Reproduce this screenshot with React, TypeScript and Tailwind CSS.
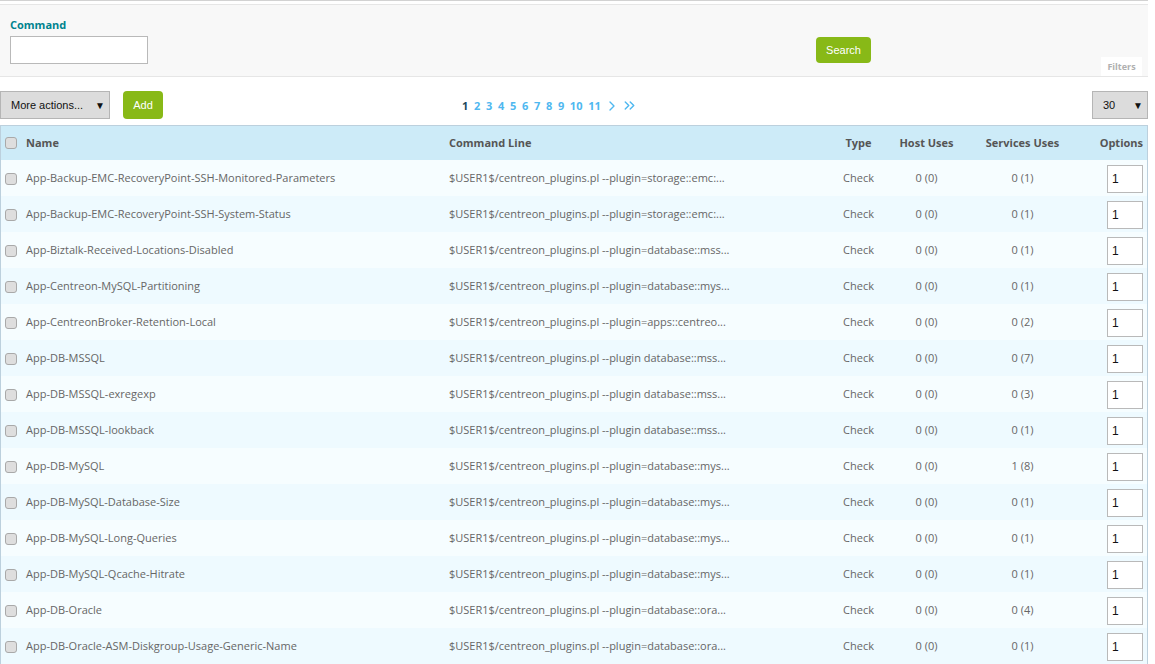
import { ChevronRight, ChevronsRight } from "lucide-react";

const ROWS: [string, string, string, string][] = [
  ["App-Backup-EMC-RecoveryPoint-SSH-Monitored-Parameters", "--plugin=storage::emc:...", "0", "1"],
  ["App-Backup-EMC-RecoveryPoint-SSH-System-Status", "--plugin=storage::emc:...", "0", "1"],
  ["App-Biztalk-Received-Locations-Disabled", "--plugin=database::mss...", "0", "1"],
  ["App-Centreon-MySQL-Partitioning", "--plugin=database::mys...", "0", "1"],
  ["App-CentreonBroker-Retention-Local", "--plugin=apps::centreo...", "0", "2"],
  ["App-DB-MSSQL", "--plugin database::mss...", "0", "7"],
  ["App-DB-MSSQL-exregexp", "--plugin database::mss...", "0", "3"],
  ["App-DB-MSSQL-lookback", "--plugin database::mss...", "0", "1"],
  ["App-DB-MySQL", "--plugin=database::mys...", "1", "8"],
  ["App-DB-MySQL-Database-Size", "--plugin=database::mys...", "0", "1"],
  ["App-DB-MySQL-Long-Queries", "--plugin=database::mys...", "0", "1"],
  ["App-DB-MySQL-Qcache-Hitrate", "--plugin=database::mys...", "0", "1"],
  ["App-DB-Oracle", "--plugin=database::ora...", "0", "4"],
  ["App-DB-Oracle-ASM-Diskgroup-Usage-Generic-Name", "--plugin=database::ora...", "0", "1"],
];

const PAGES = ["2", "3", "4", "5", "6", "7", "8", "9", "10", "11"];

function Check() {
  return (
    <input
      type="checkbox"
      aria-label="Select"
      className="block h-[12px] w-[12px] appearance-none rounded-[3px] border border-[#a9a9a9] bg-[#dedede]"
    />
  );
}

function SelectBox({ label, box }: { label: string; box: string }) {
  return (
    <div className={"flex h-[28px] items-center justify-between border border-[#b5b5b5] bg-[#dcdcdc] text-[11px] text-[#111] " + box}>
      <span>{label}</span>
      <span className="text-[10px]">▼</span>
    </div>
  );
}

export default function App() {
  return (
    <div className="h-[664px] w-[1155px] overflow-hidden bg-white font-['Liberation_Sans',sans-serif]">
      <div className="w-[1148px]">
        <div className="h-[1px] bg-[#d2d2d2]" />
        <div className="mt-[3px] flex h-[73px] border-y border-[#e6e6e6] bg-[#f8f8f8]">
          <div className="w-[816px] pl-[10px] pt-[12px]">
            <label className="block font-['Open_Sans',sans-serif] text-[11px] leading-[15px] font-bold text-[#00838f]">Command</label>
            <input type="text" className="mt-[4px] block h-[28px] w-[138px] border border-[#b9b9b9] bg-white" />
          </div>
          <div className="flex-1 pt-[32px]">
            <button className="h-[26px] w-[55px] rounded-[4px] bg-[#88b917] text-[11px] text-white">Search</button>
            <div className="mt-[-6px] ml-[285px] flex h-[19px] w-[41px] items-center justify-center bg-white font-['Open_Sans',sans-serif] text-[9px] font-bold text-[#b0b0b0]">Filters</div>
          </div>
        </div>

        <div className="relative flex h-[48px] items-center justify-between pt-[8px]">
          <div className="flex items-center gap-[13px]">
            <SelectBox label="More actions..." box="w-[110px] pl-[10px] pr-[4px]" />
            <button className="h-[28px] w-[40px] rounded-[4px] bg-[#88b917] text-[11px] text-white">Add</button>
          </div>
          <nav className="absolute top-[20px] left-[462px] flex items-center font-['Open_Sans',sans-serif] text-[11px] leading-[14px] font-bold text-[#4fb8f0]">
            <span className="mr-[5.7px] text-[#22475c]">1</span>
            <div className="flex gap-[5.7px]">
              {PAGES.map((p) => (
                <span key={p}>{p}</span>
              ))}
            </div>
            <ChevronRight className="ml-[3px] h-[16px] w-[16px]" strokeWidth={2} />
            <ChevronsRight className="ml-[1.5px] h-[17px] w-[17px]" strokeWidth={2} />
          </nav>
          <SelectBox label="30" box="w-[56px] pl-[10px] pr-[4px]" />
        </div>

        <table className="w-[1148px] table-fixed border-collapse border-x border-t border-[#bcd0dd] font-['Open_Sans',sans-serif] text-[11px] text-[#666]">
          <colgroup>
            <col className="w-[25.5px]" />
            <col className="w-[423px]" />
            <col className="w-[380.5px]" />
            <col className="w-[58px]" />
            <col className="w-[78px]" />
            <col className="w-[114px]" />
            <col />
          </colgroup>
          <thead>
            <tr className="h-[34px] bg-[#cdebf8] font-bold text-[#555]">
              <th className="pl-[4px]"><Check /></th>
              <th className="text-left">Name</th>
              <th className="text-left">Command Line</th>
              <th>Type</th>
              <th>Host Uses</th>
              <th>Services Uses</th>
              <th className="pr-[4px] text-right">Options</th>
            </tr>
          </thead>
          <tbody className="[&_td]:pt-[2px]">
            {ROWS.map(([name, args, hostUses, serviceUses], i) => (
              <tr key={name} className={"h-[36px] " + (i % 2 === 0 ? "bg-[#f6fdff]" : "bg-[#eefaff]")}>
                <td className="pl-[4px]"><Check /></td>
                <td>{name}</td>
                <td>{"$USER1$/centreon_plugins.pl " + args}</td>
                <td className="text-center">Check</td>
                <td className="text-center">0 (0)</td>
                <td className="text-center">{hostUses + " (" + serviceUses + ")"}</td>
                <td className="pr-[4px]">
                  <input
                    type="text"
                    defaultValue="1"
                    className="ml-auto block h-[28px] w-[36px] border border-[#b9b9b9] bg-white pl-[4px] font-['Liberation_Sans',sans-serif] text-[12px] text-[#111]"
                  />
                </td>
              </tr>
            ))}
          </tbody>
        </table>
      </div>
    </div>
  );
}
